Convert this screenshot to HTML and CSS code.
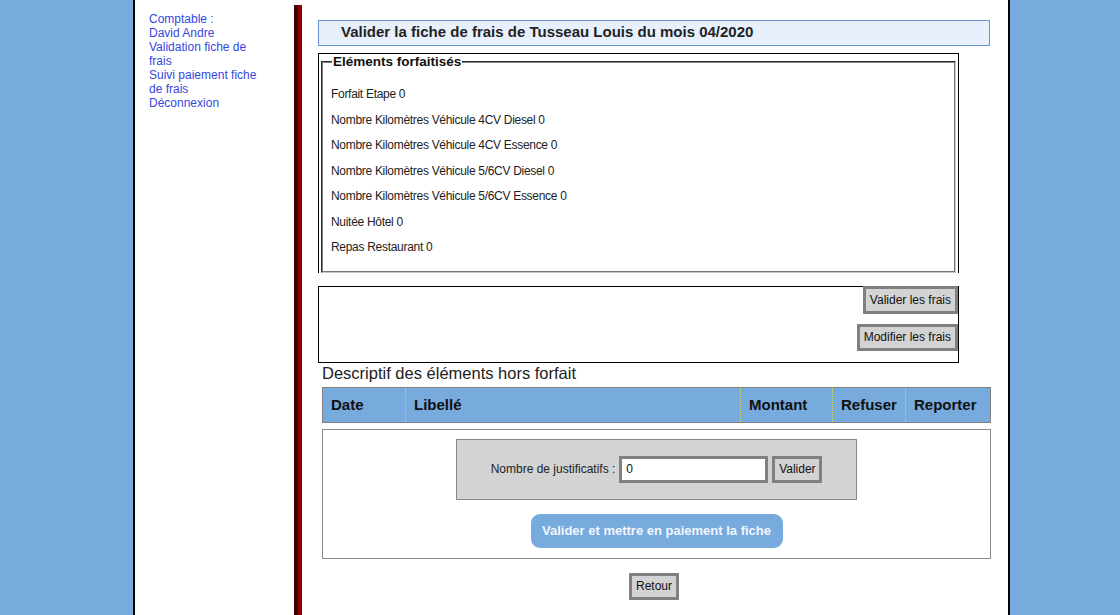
FILE: index.html
```html
<!DOCTYPE html>
<html lang="fr">
<head>
<meta charset="utf-8">
<title>Valider la fiche de frais</title>
<link rel="stylesheet" href="styles.css">
</head>
<body>
<div class="page">
  <nav class="sidebar">
    <div class="menu-item">Comptable :</div>
    <div class="menu-item">David Andre</div>
    <a class="menu-item" href="#">Validation fiche de frais</a>
    <a class="menu-item" href="#">Suivi paiement fiche de frais</a>
    <a class="menu-item" href="#">Déconnexion</a>
  </nav>
  <div class="divider"></div>
  <main class="content">
    <h2 class="titlebox">Valider la fiche de frais de Tusseau Louis du mois 04/2020</h2>

    <div class="forfait">
      <fieldset class="fieldset">
        <legend class="legend">Eléments forfaitisés</legend>
        <div class="items">
          <p class="item">Forfait Etape 0</p>
          <p class="item">Nombre Kilomètres Véhicule 4CV Diesel 0</p>
          <p class="item">Nombre Kilomètres Véhicule 4CV Essence 0</p>
          <p class="item">Nombre Kilomètres Véhicule 5/6CV Diesel 0</p>
          <p class="item">Nombre Kilomètres Véhicule 5/6CV Essence 0</p>
          <p class="item">Nuitée Hôtel 0</p>
          <p class="item">Repas Restaurant 0</p>
        </div>
      </fieldset>
    </div>

    <div class="actions">
      <button class="btn btn-first" type="button">Valider les frais</button>
      <button class="btn" type="button">Modifier les frais</button>
    </div>

    <div class="subtitle">Descriptif des éléments hors forfait</div>

    <div class="thead">
      <div class="th">Date</div>
      <div class="th sep">Libellé</div>
      <div class="th sep">Montant</div>
      <div class="th sep">Refuser</div>
      <div class="th sep">Reporter</div>
    </div>

    <div class="panel">
      <div class="justif">
        <label class="justif-label" for="nb">Nombre de justificatifs :</label>
        <input class="justif-input" id="nb" type="text" value="0">
        <button class="btn btn-small" type="button">Valider</button>
      </div>
      <button class="pay" type="button">Valider et mettre en paiement la fiche</button>
    </div>

    <div class="back-row">
      <button class="btn btn-small" type="button">Retour</button>
    </div>
  </main>
</div>
</body>
</html>
```

FILE: styles.css
```css
html, body {
  margin: 0;
  padding: 0;
}
body {
  background: #77aadd;
  font-family: "Liberation Sans", Arial, sans-serif;
  color: #222;
}
.page {
  width: 873px;
  margin-left: 133px;
  border-left: 2px solid #000;
  border-right: 2px solid #000;
  background: #fff;
  min-height: 615px;
  display: flex;
  align-items: stretch;
}
.sidebar {
  width: 145px;
  padding: 12px 0 0 14px;
  display: flex;
  flex-direction: column;
}
.menu-item {
  display: block;
  width: 118px;
  font-size: 12px;
  line-height: 14px;
  color: #3448e0;
  text-decoration: none;
}
.divider {
  width: 8px;
  margin-top: 5px;
  background: linear-gradient(to right, #400000 0, #400000 4px, #8b0000 4px, #8b0000 8px);
}
.content {
  width: 672px;
  padding: 20px 18px 0 16px;
  display: flex;
  flex-direction: column;
  align-items: flex-start;
}
.titlebox {
  box-sizing: border-box;
  width: 672px;
  height: 26px;
  margin: 0;
  padding: 2px 0 0 22px;
  border: 1px solid #6a8fd2;
  background: #e8f0fd;
  font-size: 15px;
  line-height: 17px;
  font-weight: bold;
  color: #222;
}
.forfait {
  box-sizing: border-box;
  width: 641px;
  margin-top: 7px;
  border: 1px solid #000;
  border-bottom: none;
  padding: 0 2px 0 2px;
}
.fieldset {
  margin: 0;
  border: 2px groove #c0c0c0;
  border-color: #808080 #c8c8c8 #c8c8c8 #808080;
  padding: 0 8px 10px 8px;
}
.legend {
  font-size: 13.5px;
  font-weight: bold;
  color: #111;
  padding: 0 1px;
  margin-left: 1px;
  line-height: 15px;
}
.items {
  padding-top: 13px;
}
.item {
  margin: 0;
  font-size: 12px;
  letter-spacing: -0.3px;
  line-height: 25.5px;
  color: #222;
}
.actions {
  box-sizing: border-box;
  width: 641px;
  height: 77px;
  margin-top: 13px;
  border: 1px solid #000;
  display: flex;
  flex-direction: column;
  align-items: flex-end;
  gap: 10px;
}
.btn {
  box-sizing: border-box;
  height: 27px;
  border: 3px solid #808080;
  background: #d3d3d3;
  font-family: "Liberation Sans", Arial, sans-serif;
  font-size: 12px;
  color: #111;
  padding: 0 4px;
  margin: 0;
}
.btn-first {
  height: 28px;
  margin-top: -1px;
}
.subtitle {
  margin: 1px 0 0 4px;
  font-size: 16.5px;
  line-height: 18px;
  color: #222;
}
.thead {
  box-sizing: border-box;
  width: 669px;
  height: 36px;
  margin: 5px 0 0 4px;
  border: 1px solid #808080;
  background: #77aadd;
  display: grid;
  grid-template-columns: 82px 335px 92px 73px 1fr;
  align-items: stretch;
}
.th {
  font-size: 15px;
  font-weight: bold;
  color: #111;
  padding-left: 8px;
  line-height: 34px;
}
.sep {
  border-left: 1px dotted #d6d64a;
}
.panel {
  box-sizing: border-box;
  width: 669px;
  height: 130px;
  margin: 6px 0 0 4px;
  border: 1px solid #888;
  display: flex;
  flex-direction: column;
  align-items: center;
  padding-top: 9px;
}
.justif {
  box-sizing: border-box;
  width: 401px;
  height: 61px;
  border: 1px solid #888;
  background: #d3d3d3;
  display: flex;
  align-items: center;
  justify-content: center;
  gap: 4px;
}
.justif-label {
  font-size: 12px;
  color: #222;
}
.justif-input {
  box-sizing: border-box;
  width: 149px;
  height: 27px;
  border: 3px solid #808080;
  padding: 0 4px;
  font-family: "Liberation Sans", Arial, sans-serif;
  font-size: 12px;
  color: #111;
  background: #fff;
  outline: none;
}
.btn-small {
  width: 50px;
  padding: 0;
}
.pay {
  margin-top: 14px;
  width: 252px;
  height: 34px;
  border: none;
  border-radius: 9px;
  background: #77aadd;
  color: #f2f6ff;
  font-family: "Liberation Sans", Arial, sans-serif;
  font-size: 13px;
  font-weight: bold;
  padding: 0;
}
.back-row {
  width: 672px;
  display: flex;
  justify-content: center;
  margin-top: 14px;
}
```
